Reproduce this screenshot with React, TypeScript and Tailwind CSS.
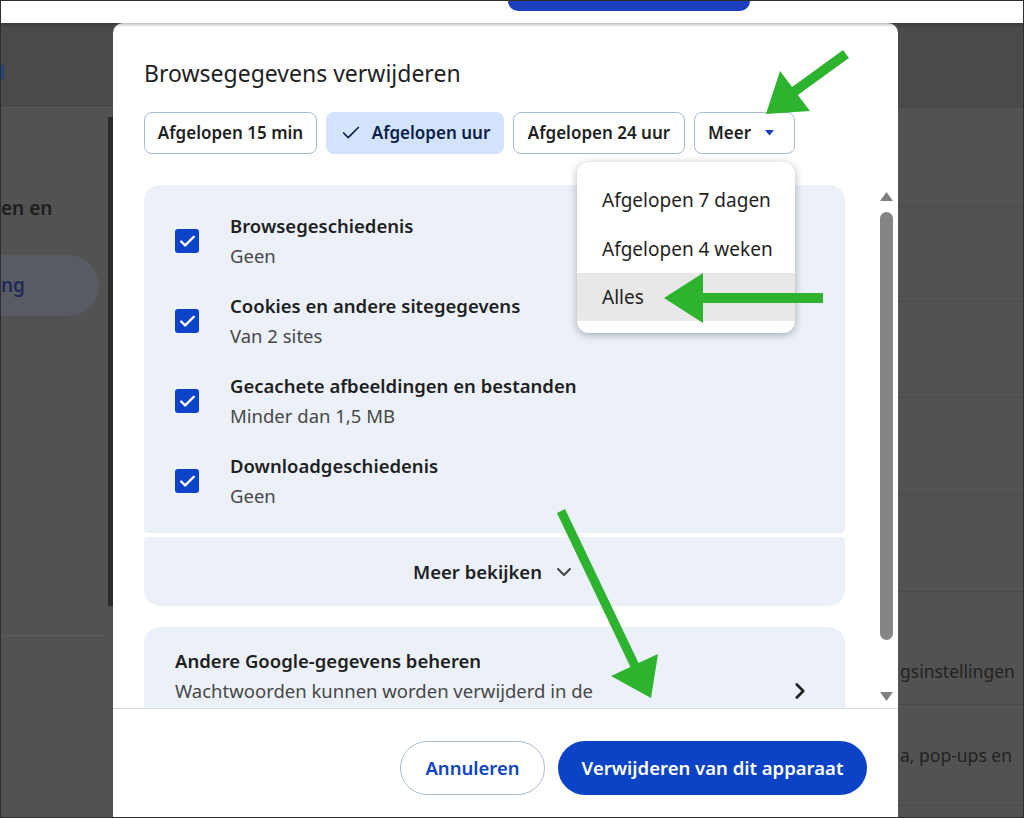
import { Check, ChevronDown, ChevronRight } from 'lucide-react'

const rows = [
  { title: 'Browsegeschiedenis', sub: 'Geen' },
  { title: 'Cookies en andere sitegegevens', sub: 'Van 2 sites' },
  { title: 'Gecachete afbeeldingen en bestanden', sub: 'Minder dan 1,5 MB' },
  { title: 'Downloadgeschiedenis', sub: 'Geen' },
]

function LeftPage() {
  return (
    <div className="flex w-[112px] shrink-0 flex-col">
      <div className="h-[85px] border-b border-[#5b5b5b] bg-[#4a4a4a] pt-[42px]">
        <div className="h-[14px] w-[3px] bg-[#24407f]" />
      </div>
      <div className="flex flex-1">
        <div className="flex flex-1 flex-col">
          <p className="mt-[88px] text-[19px] font-semibold leading-[25px] text-[#1e1e1e]">en en</p>
          <div className="mt-[34px] flex h-[61px] w-[98px] items-center rounded-r-full bg-[#585b62]">
            <span className="text-[19px] font-semibold text-[#1c2b58]">ng</span>
          </div>
          <div className="mt-[319px] h-px w-[105px] bg-[#5c5c5c]" />
        </div>
        <div className="mt-[9px] h-[489px] w-[5px] bg-[#2b2b2b]" />
      </div>
    </div>
  )
}

function RightPage() {
  const line = 'border-b border-[#4a4a4a]'
  return (
    <div className="flex flex-1 flex-col text-[17.5px] text-[#222]">
      <div className="h-[85px] shrink-0 bg-[#4a4a4a]" />
      <div className={`h-[99px] shrink-0 ${line}`} />
      <div className={`h-[95px] shrink-0 ${line}`} />
      <div className={`h-[96px] shrink-0 ${line}`} />
      <div className={`h-[97px] shrink-0 ${line}`} />
      <div className={`h-[97px] shrink-0 ${line}`} />
      <div className={`flex h-[113px] shrink-0 items-end pb-[20px] pl-[2px] ${line}`}>gsinstellingen</div>
      <div className={`flex h-[101px] shrink-0 items-center pl-[2px] ${line}`}>a, pop-ups en</div>
    </div>
  )
}

function Chip({ label, selected, w }: { label: string; selected?: boolean; w: string }) {
  return (
    <div
      className={`flex h-[42px] items-center justify-center gap-[10px] rounded-[8px] text-[17px] font-semibold ${w} ${
        selected ? 'bg-[#d3e3fd] text-[#0a1d4a]' : 'border border-[#a9bad3] text-[#1f1f1f]'
      }`}
    >
      {selected && <Check size={22} strokeWidth={1.8} />}
      {label}
    </div>
  )
}

function Dialog() {
  return (
    <div className="relative flex w-[785px] shrink-0 flex-col rounded-t-[10px] bg-white">
      <h2 className="pl-[31px] pt-[36px] text-[23px] leading-[28px] text-[#1f1f1f]">Browsegegevens verwijderen</h2>

      <div className="mt-[25px] flex gap-[9px] pl-[31px]">
        <Chip label="Afgelopen 15 min" w="w-[173px]" />
        <Chip label="Afgelopen uur" selected w="w-[178px]" />
        <Chip label="Afgelopen 24 uur" w="w-[172px]" />
        <div className="flex h-[42px] w-[101px] items-center gap-[14px] rounded-[8px] border border-[#a9bad3] pl-[13px] text-[17px] font-semibold">
          Meer
          <svg width="9" height="6" viewBox="0 0 9 6">
            <path d="M0 0h9L4.5 5.5z" fill="#1a3fbf" />
          </svg>
        </div>
      </div>

      {/* scroll area */}
      <div className="mt-[31px] flex h-[523px] shrink-0 pl-[31px]">
        <div className="flex w-[701px] flex-col overflow-hidden">
          <div className="rounded-b-[4px] rounded-t-[16px] bg-[#ecf1f9] pb-[12px] pl-[31px] pt-[16px]">
            {rows.map(r => (
              <div key={r.title} className="flex h-[80px] items-center gap-[31px]">
                <div className="flex h-[24px] w-[24px] items-center justify-center rounded-[3px] bg-[#0b44c8]">
                  <Check size={19} strokeWidth={3} color="#fff" />
                </div>
                <div className="leading-[30px]">
                  <p className="text-[18.5px] font-semibold text-[#1f1f1f]">{r.title}</p>
                  <p className="text-[18.5px] text-[#474747]">{r.sub}</p>
                </div>
              </div>
            ))}
          </div>
          <div className="mt-[4px] flex h-[69px] shrink-0 items-center justify-center gap-[10px] rounded-b-[16px] rounded-t-[4px] bg-[#ecf1f9] text-[18.5px] font-semibold">
            Meer bekijken
            <ChevronDown size={24} strokeWidth={2} color="#444" />
          </div>
          <div className="mt-[21px] flex shrink-0 justify-between rounded-t-[16px] bg-[#ecf1f9] pb-[40px] pl-[31px] pr-[32px] pt-[19px] leading-[30px]">
            <div>
              <p className="text-[18.5px] font-semibold">Andere Google-gegevens beheren</p>
              <p className="text-[18.5px] text-[#474747]">Wachtwoorden kunnen worden verwijderd in de</p>
            </div>
            <ChevronRight size={26} strokeWidth={2.4} className="mt-[32px]" color="#1f1f1f" />
          </div>
        </div>

        {/* scrollbar */}
        <div className="ml-[33px] flex w-[17px] flex-col items-center pt-[7px]">
          <svg width="13" height="9" viewBox="0 0 13 9">
            <path d="M6.5 0L13 9H0z" fill="#808080" />
          </svg>
          <div className="mt-[11px] h-[428px] w-[13px] rounded-full bg-[#858585]" />
          <svg width="13" height="9" viewBox="0 0 13 9" className="mt-[52px]">
            <path d="M0 0h13L6.5 9z" fill="#808080" />
          </svg>
        </div>
      </div>

      <div className="flex flex-1 justify-end gap-[13px] border-t border-[#d6d9de] pr-[31px] pt-[32px]">
        <div className="flex h-[54px] w-[145px] items-center justify-center rounded-full border border-[#a9bad3] text-[18.5px] font-semibold text-[#0b44c8]">
          Annuleren
        </div>
        <div className="flex h-[54px] w-[309px] items-center justify-center rounded-full bg-[#0b43c6] text-[18.5px] font-semibold text-white">
          Verwijderen van dit apparaat
        </div>
      </div>

      {/* dropdown */}
      <div className="absolute left-[464px] top-[139px] w-[218px] rounded-[12px] bg-white pb-[12px] pt-[14px] text-[19px] text-[#1f1f1f] shadow-[0_2px_8px_rgba(0,0,0,0.3)]">
        <div className="flex h-[49px] items-center pl-[25px]">Afgelopen 7 dagen</div>
        <div className="flex h-[48px] items-center pl-[25px]">Afgelopen 4 weken</div>
        <div className="flex h-[48px] items-center bg-[#e8e8e8] pl-[25px]">Alles</div>
      </div>
    </div>
  )
}

function Arrows() {
  const green = '#2db32d'
  return (
    <svg className="pointer-events-none absolute left-0 top-0" width="1024" height="818" viewBox="0 0 1024 818">
      <polygon
        fill={green}
        points="842.1,48.95 791.1,85.95 779,70 765,113 809,110 796.9,94.05 847.9,57.05"
      />
      <polygon fill={green} points="822,292 702,292 702,272 663,297 702,322 702,302 822,302" />
      <polygon
        fill={green}
        points="555.94,511.94 629.44,665.94 610,675 650,697 657,653 637.56,662.06 564.06,508.06"
      />
    </svg>
  )
}

export default function App() {
  return (
    <div className="relative flex h-[818px] w-[1024px] flex-col overflow-hidden border border-[#2e2e2e] bg-[#525252] font-['Noto_Sans',sans-serif] text-[#1f1f1f]">
      <div className="relative z-10 h-[22px] shrink-0 bg-white shadow-[0_2px_3px_rgba(0,0,0,0.25)]">
        <div className="ml-[507px] h-[10px] w-[242px] rounded-b-[18px] bg-[#1a3fbf]" />
      </div>
      <div className="flex min-h-0 flex-1">
        <LeftPage />
        <Dialog />
        <RightPage />
      </div>
      <Arrows />
    </div>
  )
}
